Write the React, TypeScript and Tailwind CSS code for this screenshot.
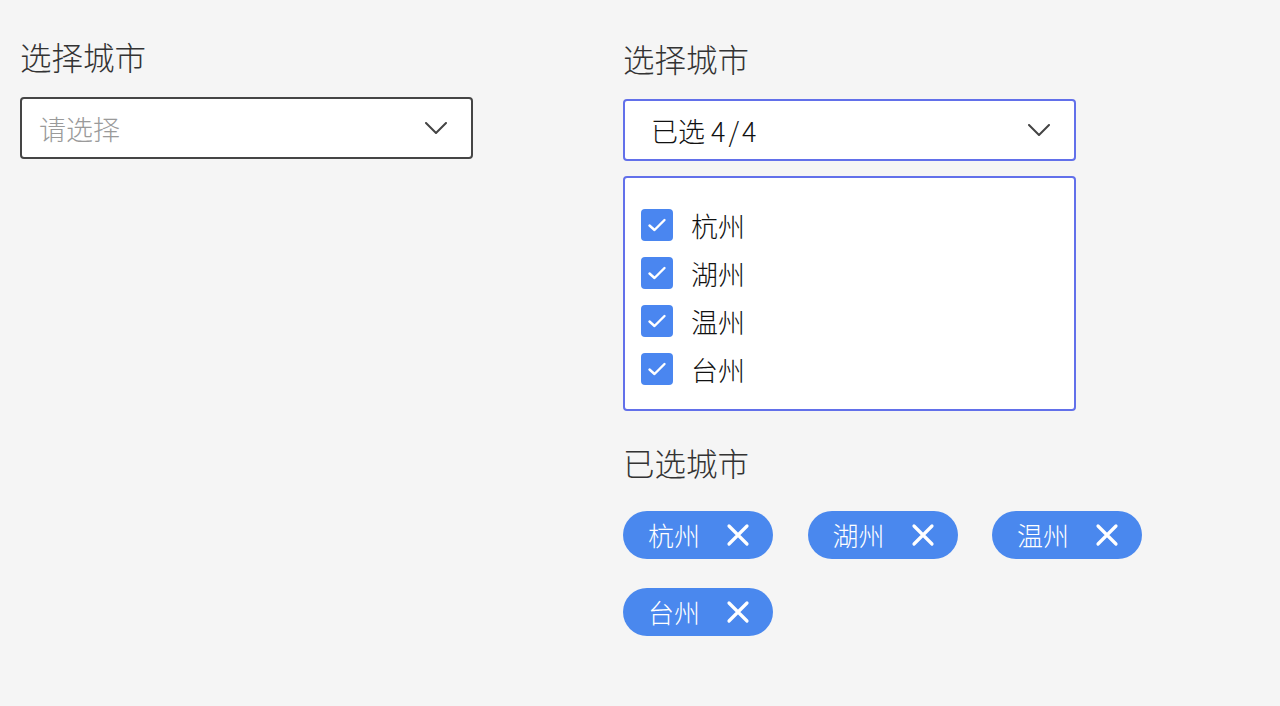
import React from "react";

const font = { fontFamily: '"Noto Sans CJK SC", "Noto Sans", sans-serif' };

function Chevron() {
  return (
    <svg width="22" height="12" viewBox="0 0 22 12" fill="none">
      <path d="M1 1 L11 11 L21 1" stroke="#444" strokeWidth="2" strokeLinecap="round" strokeLinejoin="round" />
    </svg>
  );
}

function Check() {
  return (
    <svg width="20" height="16" viewBox="0 0 20 16" fill="none">
      <path d="M2.5 8.5 L7.5 13 L17.5 3" stroke="#fff" strokeWidth="2.4" strokeLinecap="round" strokeLinejoin="round" />
    </svg>
  );
}

function XIcon() {
  return (
    <svg width="24" height="24" viewBox="0 0 24 24" fill="none">
      <path d="M3 3 L21 21 M21 3 L3 21" stroke="#fff" strokeWidth="3.2" strokeLinecap="round" />
    </svg>
  );
}

const cities = ["杭州", "湖州", "温州", "台州"];

export default function App() {
  return (
    <div className="w-[1280px] h-[706px] bg-[#f5f5f5] flex font-light" style={font}>
      <div className="ml-[20px] w-[453px] pt-[38px] flex flex-col">
        <div className="text-[31.5px] leading-[36px] text-[#333]">选择城市</div>
        <div className="mt-[23px] h-[62px] bg-white border-2 border-[#454545] rounded-[4px] flex items-center justify-between pl-[17px] pr-[24px]">
          <span className="text-[27px] text-[#9a9a9a] leading-none">请选择</span>
          <Chevron />
        </div>
      </div>
      <div className="ml-[150px] w-[560px] pt-[40px] flex flex-col">
        <div className="text-[31.5px] leading-[36px] text-[#333]">选择城市</div>
        <div className="mt-[23px] w-[453px] h-[62px] bg-white border-2 border-[#6270ea] rounded-[4px] flex items-center justify-between pl-[26px] pr-[24px]">
          <span className="text-[27px] text-[#111] leading-none">
            已选 <span className="tracking-[3px]">4/4</span>
          </span>
          <Chevron />
        </div>
        <div className="mt-[15px] w-[453px] h-[235px] bg-white border-2 border-[#6270ea] rounded-[4px] pt-[23px] pl-[16px] flex flex-col">
          {cities.map((c) => (
            <div key={c} className="h-[48px] flex items-center">
              <div className="w-[32px] h-[32px] rounded-[4px] bg-[#4a86f0] flex items-center justify-center">
                <Check />
              </div>
              <span className="ml-[18px] text-[27px] text-[#111] leading-none">{c}</span>
            </div>
          ))}
        </div>
        <div className="mt-[33px] text-[31.5px] leading-[36px] text-[#333]">已选城市</div>
        <div className="mt-[31px] flex flex-wrap gap-x-[34.5px] gap-y-[29px]">
          {cities.map((c) => (
            <div key={c} className="w-[150px] h-[48px] rounded-full bg-[#4a88ee] flex items-center pl-[25px]">
              <span className="text-[26px] text-white leading-none">{c}</span>
              <span className="ml-[26px] flex items-center"><XIcon /></span>
            </div>
          ))}
        </div>
      </div>
    </div>
  );
}
